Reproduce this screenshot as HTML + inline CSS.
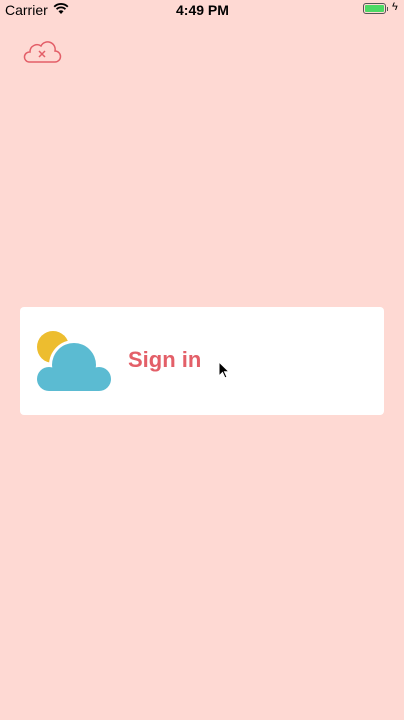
<!DOCTYPE html>
<html><head><meta charset="utf-8"><style>
body{margin:0;width:404px;height:720px;background:#fed9d3;position:relative;overflow:hidden;font-family:"Liberation Sans",sans-serif}
.sb{position:absolute;top:0;left:0;width:404px;height:20px;font-size:14px;color:#000}
.card{position:absolute;left:20px;top:307px;width:364px;height:108px;background:#fff;border-radius:4px}
.t{position:absolute;left:128px;top:347px;font-size:22px;color:#e35f68;font-weight:bold;letter-spacing:0px}
</style></head><body>
<div class="sb">
<span style="position:absolute;left:5px;top:2px">Carrier</span>
<svg style="position:absolute;left:53px;top:3px" width="16" height="12" viewBox="0 0 16 12"><path d="M8 11 L5.5 8.2 A3.6 3.6 0 0 1 10.5 8.2Z" fill="#000"/><path d="M3.6 6.2 A6.2 6.2 0 0 1 12.4 6.2" stroke="#000" stroke-width="1.8" fill="none"/><path d="M1.2 3.8 A9.5 9.5 0 0 1 14.8 3.8" stroke="#000" stroke-width="1.8" fill="none"/></svg>
<span style="position:absolute;left:176px;top:2px;font-weight:bold">4:49 PM</span>
<div style="position:absolute;left:363px;top:3px;width:23px;height:11px;border:1px solid #555;border-radius:3px;box-sizing:border-box;padding:1px"><div style="background:#4cd964;height:100%;border-radius:1px"></div></div>
<div style="position:absolute;left:387px;top:7px;width:1px;height:4px;background:#555"></div>
<span style="position:absolute;left:392px;top:1px;font-size:11px">ϟ</span>
</div>
<svg style="position:absolute;left:22px;top:38px" width="40" height="26" viewBox="0 0 40 26"><path d="M7 24 H33 A5.5 5.5 0 0 0 33 13 A7.5 7.5 0 0 0 19 8 A7 7 0 0 0 8 14 A5 5 0 0 0 7 24Z" fill="none" stroke="#e35f68" stroke-width="1.5"/><path d="M17 13 L23 19 M23 13 L17 19" stroke="#e35f68" stroke-width="1.5"/></svg>
<div class="card"></div>
<svg style="position:absolute;left:36px;top:330px" width="78" height="64" viewBox="0 0 78 64">
<circle cx="17" cy="17" r="16" fill="#edbd2f"/>
<g fill="#fff"><circle cx="13" cy="49" r="15"/><circle cx="38" cy="35" r="25"/><circle cx="63" cy="49" r="15"/><rect x="13" y="40" width="50" height="24"/></g>
<g fill="#5bbbd2"><circle cx="13" cy="49" r="12"/><circle cx="38" cy="35" r="22"/><circle cx="63" cy="49" r="12"/><rect x="13" y="40" width="50" height="21"/></g>
</svg>
<div class="t">Sign in</div>
<svg style="position:absolute;left:218px;top:361px" width="12" height="18" viewBox="0 0 12 18"><path d="M1 1 V15 L4.5 11.5 L7 17 L9 16 L6.5 10.8 H11Z" fill="#000" stroke="#fff" stroke-width="1"/></svg>
</body></html>
